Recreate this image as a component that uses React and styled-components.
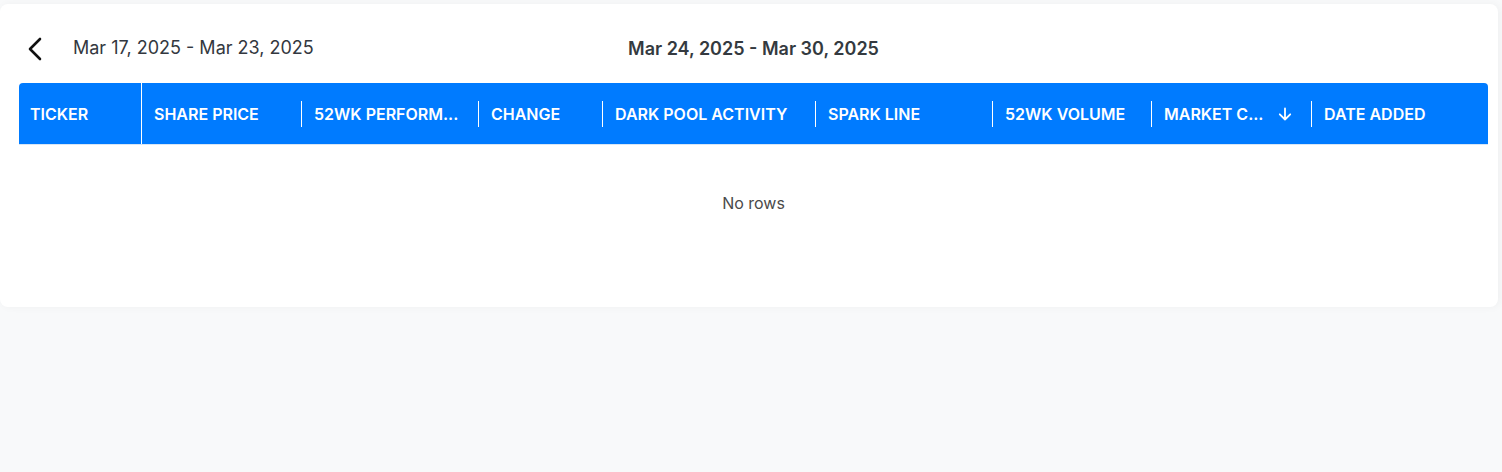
import React from 'react';
import styled, { createGlobalStyle } from 'styled-components';

const GlobalStyle = createGlobalStyle`
  html, body {
    margin: 0;
    padding: 0;
    background: #f8f9fa;
    font-family: Inter, "Noto Sans", Arial, sans-serif;
  }
`;

const Page = styled.div`
  padding-top: 4px;
  min-height: 468px;
`;

const Card = styled.div`
  width: 1479px;
  background: #ffffff;
  border-radius: 8px;
  padding: 0 0 46px 19px;
  box-shadow: 2px 0 8px rgba(0, 0, 0, 0.04);
`;

const TitleRow = styled.div`
  width: 1469px;
  height: 79px;
  display: grid;
  grid-template-columns: 1fr auto 1fr;
  align-items: center;
  padding-top: 9px;
  box-sizing: border-box;
`;

const WeekNav = styled.div`
  display: flex;
  align-items: center;
  padding-bottom: 2px;
`;

const BackButton = styled.button`
  border: 0;
  background: none;
  padding: 0;
  margin: 4px 0 0 5px;
  width: 22px;
  height: 26px;
  display: flex;
  align-items: center;
  justify-content: center;
  cursor: pointer;
`;

const PrevWeek = styled.span`
  margin-left: 27px;
  font-size: 18px;
  color: #333840;
  font-weight: 400;
`;

const CurrentWeek = styled.span`
  font-size: 18px;
  font-weight: 600;
  color: #343a40;
`;

const Grid = styled.div`
  width: 1469px;
`;

const HeaderRow = styled.div`
  display: grid;
  grid-template-columns: ${p => p.$cols};
  height: 62px;
  background: #007bff;
  border-radius: 4px 4px 0 0;
  border-bottom: 1px solid #d8e6f5;
  box-sizing: border-box;
`;

const HeaderCell = styled.div`
  position: relative;
  display: flex;
  align-items: center;
  padding: 1px 12px 0 ${p => (p.$first ? 11 : 12)}px;
  color: #ffffff;
  font-size: 16px;
  font-weight: 600;
  text-transform: uppercase;
  white-space: nowrap;
  overflow: hidden;
  border-right: ${p => (p.$pinned ? '1px solid #ffffff' : '0')};
  min-width: 0;

  &::after {
    content: '';
    display: ${p => (p.$pinned || p.$last ? 'none' : 'block')};
    position: absolute;
    right: 0;
    top: 18px;
    width: 1px;
    height: 26px;
    background: #ffffff;
  }
`;

const Label = styled.span`
  min-width: 0;
`;

const SortIcon = styled.span`
  display: flex;
  margin-left: 15px;
  flex-shrink: 0;
`;

const Empty = styled.div`
  height: 116px;
  display: flex;
  align-items: center;
  justify-content: center;
  font-size: 16px;
  color: #4a4a4a;
`;

const columns = [
  { label: 'Ticker', width: 123, pinned: true },
  { label: 'Share Price', width: 160 },
  { label: '52wk Perform...', width: 177 },
  { label: 'Change', width: 124 },
  { label: 'Dark Pool Activity', width: 213 },
  { label: 'Spark Line', width: 177 },
  { label: '52wk Volume', width: 159 },
  { label: 'Market C...', width: 160, sorted: true },
  { label: 'Date Added', width: 176 },
];

const Chevron = () => (
  <svg width="16" height="24" viewBox="0 0 16 24" fill="none">
    <path d="M13 2 L3 12 L13 22" stroke="#111" strokeWidth="2.6" strokeLinecap="round" strokeLinejoin="round" />
  </svg>
);

const ArrowDown = () => (
  <svg width="14" height="14" viewBox="0 0 14 14" fill="none">
    <path d="M7 1.5v11M1.8 7.3 7 12.5l5.2-5.2" stroke="#fff" strokeWidth="1.8" strokeLinecap="round" strokeLinejoin="round" />
  </svg>
);

const App = () => {
  const cols = columns.map(c => `${c.width}px`).join(' ');
  return (
    <Page>
      <GlobalStyle />
      <Card>
        <TitleRow>
          <WeekNav>
            <BackButton aria-label="previous week">
              <Chevron />
            </BackButton>
            <PrevWeek>Mar 17, 2025 - Mar 23, 2025</PrevWeek>
          </WeekNav>
          <CurrentWeek>Mar 24, 2025 - Mar 30, 2025</CurrentWeek>
          <div />
        </TitleRow>
        <Grid>
          <HeaderRow $cols={cols}>
            {columns.map((c, i) => (
              <HeaderCell key={c.label} $first={i === 0} $pinned={c.pinned} $last={i === columns.length - 1}>
                <Label>{c.label}</Label>
                {c.sorted && (
                  <SortIcon>
                    <ArrowDown />
                  </SortIcon>
                )}
              </HeaderCell>
            ))}
          </HeaderRow>
          <Empty>No rows</Empty>
        </Grid>
      </Card>
    </Page>
  );
};

export default App;
